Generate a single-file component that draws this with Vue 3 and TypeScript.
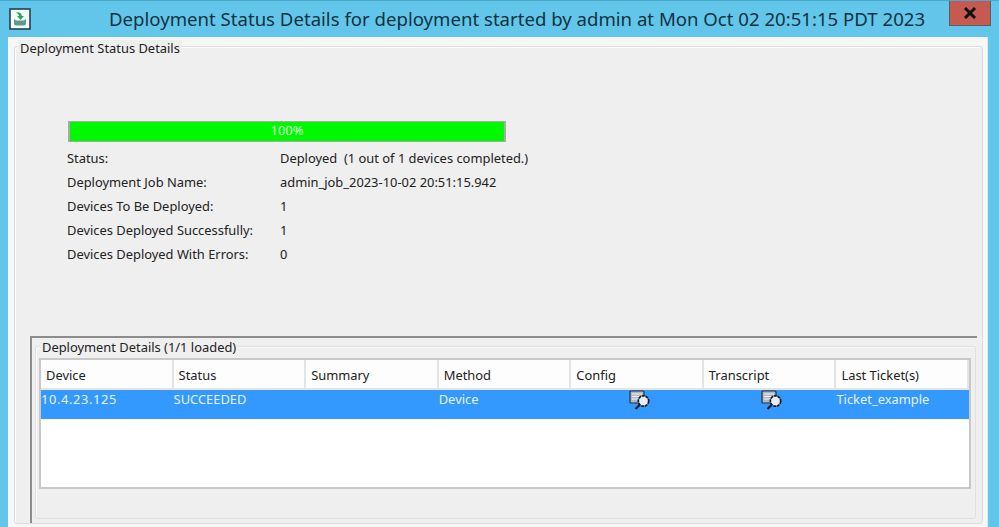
<template>
  <div class="window">
    <header class="titlebar">
      <svg class="app-icon" width="22" height="22" viewBox="0 0 22 22">
        <rect x="1" y="1" width="20" height="20" fill="#f4f8f6" stroke="#24414f" stroke-width="1.6" />
        <path d="M5 11v4.500q0 2 2 2h8q2 0 2-2V11l-2 1.500H7z" fill="#5c9a8c" />
        <path d="M7 4.500q5-1 6 3.500h2l-3.500 4L8 8h2.200q-.7-2.500-3.200-3.500z" fill="#2fa35a" />
      </svg>
      <h1 class="title">{{ title }}</h1>
      <button class="close" type="button">
        <svg width="14" height="12" viewBox="0 0 14 12">
          <path d="M2 1l10 10M12 1L2 11" fill="none" stroke="#111" stroke-width="3" />
        </svg>
      </button>
    </header>

    <main class="body">
      <section class="panel">
        <span class="legend panel-legend">Deployment Status Details</span>

        <div class="progress">
          <div class="progress-fill">100%</div>
        </div>

        <dl class="info">
          <template v-for="row in info" :key="row.label">
            <dt>{{ row.label }}</dt>
            <dd>{{ row.value }}</dd>
          </template>
        </dl>

        <section class="details">
          <div class="details-inner">
            <span class="legend details-legend">Deployment Details (1/1 loaded)</span>
            <div class="table">
              <div class="head">
                <div v-for="col in columns" :key="col" class="th">{{ col }}</div>
              </div>
              <div class="row">
                <div class="td device">10.4.23.125</div>
                <div class="td">SUCCEEDED</div>
                <div class="td"></div>
                <div class="td">Device</div>
                <div v-for="n in 2" :key="n" class="td icon-cell">
                  <svg width="22" height="20" viewBox="0 0 22 20">
                    <rect x="1" y="1" width="14" height="12" rx="1" fill="#aeb8c4" stroke="#26303a" stroke-width="1.200" />
                    <path d="M3 4h10M3 6.500h8M3 9h6" stroke="#eef1f4" stroke-width="1" />
                    <circle cx="14.500" cy="11" r="5.200" fill="#e6eef3" stroke="#15191d" stroke-width="1.700" stroke-dasharray="3 .7" />
                    <path d="M10.500 15L6.500 19" stroke="#15191d" stroke-width="2.200" />
                  </svg>
                </div>
                <div class="td">Ticket_example</div>
              </div>
            </div>
          </div>
        </section>
      </section>
    </main>
  </div>
</template>

<script setup lang="ts">
const title = 'Deployment Status Details for deployment started by admin at Mon Oct 02 20:51:15 PDT 2023'

const info = [
  { label: 'Status:', value: 'Deployed  (1 out of 1 devices completed.)' },
  { label: 'Deployment Job Name:', value: 'admin_job_2023-10-02 20:51:15.942' },
  { label: 'Devices To Be Deployed:', value: '1' },
  { label: 'Devices Deployed Successfully:', value: '1' },
  { label: 'Devices Deployed With Errors:', value: '0' },
]

const columns = ['Device', 'Status', 'Summary', 'Method', 'Config', 'Transcript', 'Last Ticket(s)']
</script>

<style>
html,
body {
  margin: 0;
  overflow: hidden;
}
</style>

<style scoped>
.window {
  box-sizing: border-box;
  width: 999px;
  height: 527px;
  display: flex;
  flex-direction: column;
  overflow: hidden;
  background: #62c6ea;
  border-top: 1px solid #4aa9cb;
  font-family: 'Noto Sans', 'Open Sans', sans-serif;
  font-size: 12.9px;
  color: #222;
}

.titlebar {
  height: 36px;
  flex: none;
  display: flex;
  align-items: flex-start;
  position: relative;
}

.app-icon {
  margin: 7px 0 0 9px;
}

.title {
  margin: 6px 0 0 78px;
  font-size: 18.6px;
  line-height: 24px;
  font-weight: 400;
  color: #14323f;
  white-space: nowrap;
}

.close {
  position: absolute;
  left: 949px;
  top: -1px;
  width: 42px;
  height: 26px;
  padding: 0;
  display: flex;
  align-items: center;
  justify-content: center;
  background: #c75a50;
  border: 1px solid #58606a;
}

.body {
  flex: 1;
  min-height: 0;
  margin: 0 11px 0 8px;
  padding: 9px 4px 3px 6px;
  box-sizing: border-box;
  background: #f7f7f7;
  border-right: 1px solid #dfe6e9;
  display: flex;
}

.panel {
  flex: 1;
  min-width: 0;
  position: relative;
  box-sizing: border-box;
  background: #efefef;
  border: 1px solid #dcdcdc;
  border-radius: 3px;
  box-shadow: inset 1px 1px 0 #fff;
  padding: 74px 5px 0 15px;
  display: flex;
  flex-direction: column;
}

.legend {
  position: absolute;
  background: #efefef;
  padding: 0 2px;
  line-height: 16px;
  white-space: nowrap;
}

.panel-legend {
  left: 3px;
  top: -7px;
}

.progress {
  box-sizing: border-box;
  width: 438px;
  height: 21px;
  margin-left: 38px;
  border: 1px solid #a9a9a9;
  border-left-width: 2px;
  border-right-width: 2px;
  background: #fff;
}

.progress-fill {
  height: 100%;
  background: #00f800;
  color: #d8ffd8;
  text-align: center;
  line-height: 17px;
}

.info {
  margin: 4px 0 70px 37px;
  display: grid;
  grid-template-columns: 213px 1fr;
  grid-auto-rows: 24px;
  line-height: 24px;
}

.info dt,
.info dd {
  margin: 0;
  white-space: pre;
}

.details {
  flex: 1;
  min-height: 0;
  border-top: 2px solid #8c8c8c;
  border-left: 2px solid #8c8c8c;
  padding: 8px 1px 4px 3px;
  display: flex;
}

.details-inner {
  flex: 1;
  min-width: 0;
  position: relative;
  box-sizing: border-box;
  border: 1px solid #e0e0e0;
  border-radius: 3px;
  box-shadow: inset 1px 1px 0 #fafafa;
  padding: 11px 4px 0 3px;
}

.details-legend {
  left: 4px;
  top: -8px;
}

.table {
  height: 131px;
  box-sizing: border-box;
  background: #fff;
  border: 2px solid #c8c8c8;
}

.head,
.row {
  display: grid;
  grid-template-columns: repeat(7, 1fr);
}

.head {
  height: 30px;
  background: #e4e4e4;
}

.th {
  box-sizing: border-box;
  height: 28px;
  margin-right: 2px;
  padding-left: 5px;
  line-height: 30px;
  background: #fdfdfd;
  white-space: nowrap;
}

.row {
  height: 29px;
  background: #3399ff;
  color: #e6f3ff;
}

.td {
  line-height: 18px;
  white-space: nowrap;
}

.device {
  letter-spacing: 0.6px;
}

.icon-cell {
  display: flex;
  justify-content: center;
  padding-left: 4px;
}
</style>
